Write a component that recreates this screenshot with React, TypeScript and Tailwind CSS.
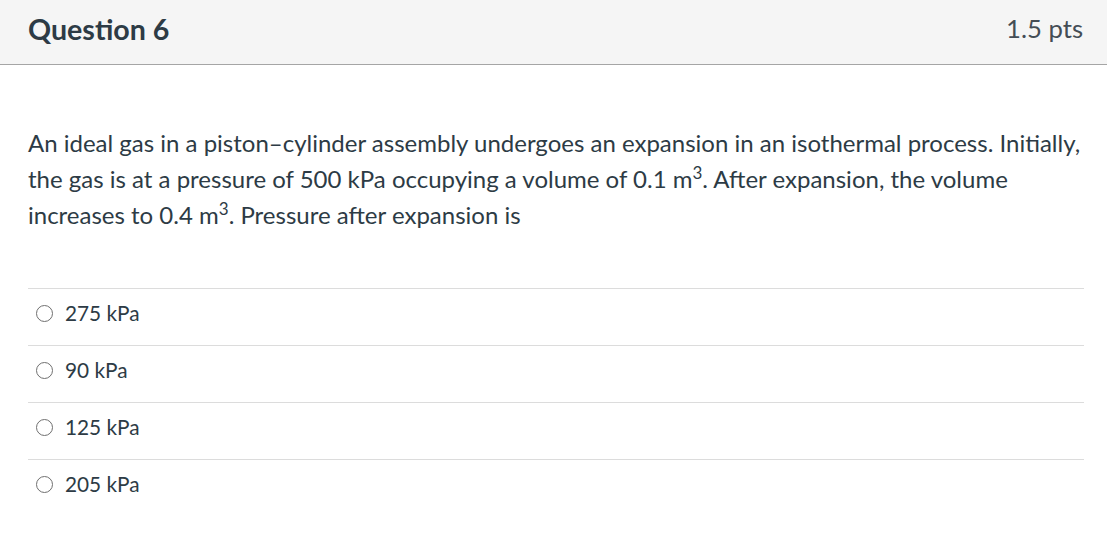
import React from "react";

const answers = ["275 kPa", "90 kPa", "125 kPa", "205 kPa"];

export default function App() {
  return (
    <div className="w-[1107px] h-[540px] bg-white overflow-hidden text-[#2d3b45]" style={{ fontFamily: "Lato, 'Noto Sans', sans-serif" }}>
      <div className="h-[65px] bg-[#f5f5f5] border-b border-[#a5a5a5] flex items-center justify-between pl-[28px] pr-[24px] pb-[6px]">
        <div className="text-[28.6px] font-bold text-[#2d3b45] leading-none">Question 6</div>
        <div className="text-[25.7px] text-[#444d55] leading-none">1.5 pts</div>
      </div>
      <div className="pl-[28px] pr-[20px] pt-[60px]">
        <div className="text-[24px] leading-[36px] text-[#2d3b45]">
          An ideal gas in a piston–cylinder assembly undergoes an expansion in an isothermal process. Initially, the gas is at a pressure of 500 kPa occupying a volume of 0.1 m<sup className="text-[17px] leading-none -top-[9px]">3</sup>. After expansion, the volume increases to 0.4 m<sup className="text-[17px] leading-none -top-[9px]">3</sup>. Pressure after expansion is
        </div>
        <div className="mt-[55px] w-[1056px]">
          {answers.map((a) => (
            <div key={a} className="border-t border-[#dcdcdc] h-[57px] flex items-center pl-[8px] pb-[8px]">
              <span className="w-[17px] h-[17px] rounded-full border-[1.5px] border-[#6f6f6f] mr-[12px]" />
              <span className="text-[20.8px] text-[#2d3b45]">{a}</span>
            </div>
          ))}
        </div>
      </div>
    </div>
  );
}
